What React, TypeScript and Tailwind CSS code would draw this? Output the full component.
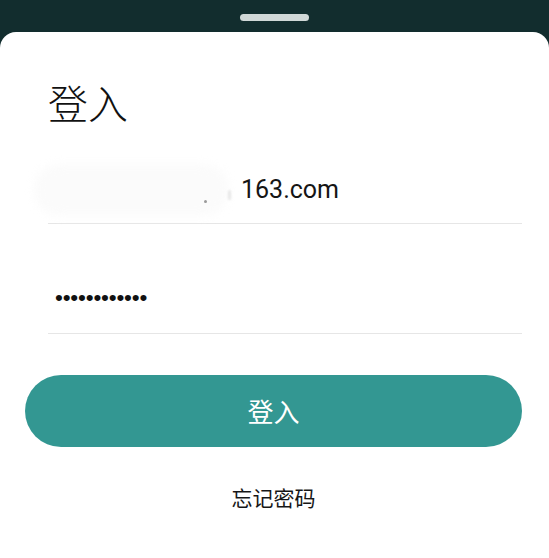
import React from "react";

export default function App() {
  return (
    <div className="w-full h-[558px] bg-[#122d2e] flex flex-col overflow-hidden">
      <div className="h-[32px] shrink-0 flex justify-center pt-[14px]">
        <div className="w-[69px] h-[7px] rounded-full bg-[#d0d8d7]" />
      </div>
      <div className="flex-1 bg-white rounded-t-[16px] pl-[48px] pr-[27px] pt-[50px] flex flex-col">
        <h1
          className="text-[40px] leading-none text-[#111] font-light"
          style={{ fontFamily: '"Noto Sans CJK SC", sans-serif' }}
        >
          登入
        </h1>

        <div className="mt-[31px] h-[71px] pt-[3px] flex items-center border-b border-[#e6e6e6]">
          <div className="relative ml-[-14px] w-[195px] mr-[12px] h-[52px] shrink-0">
            <div className="absolute inset-0 rounded-full bg-[#fbfbfb] blur-[5px]" />
            <div className="absolute left-[170px] top-[36px] w-[3px] h-[3px] rounded-full bg-[#9a9a9a] blur-[0.5px]" />
            <div className="absolute left-[194px] top-[26px] w-[3px] h-[10px] rounded-full bg-[#e6e6e6] blur-[1px]" />
          </div>
          <span
            className="text-[25px] leading-[25px] text-[#151515]"
            style={{ fontFamily: 'Roboto, "Noto Sans", sans-serif' }}
          >
            163.com
          </span>
        </div>

        <div className="h-[110px] pt-[39px] flex items-center border-b border-[#e6e6e6]">
          <span
            className="pl-[7px] text-[22.5px] leading-none tracking-[-0.2px] text-[#111]"
            style={{ fontFamily: '"Liberation Sans", Arial, sans-serif' }}
          >
            ••••••••••••
          </span>
        </div>

        <button
          className="mt-[41px] ml-[-23px] h-[72px] rounded-full bg-[#339792] flex items-center justify-center text-white text-[26px] leading-none"
          style={{ fontFamily: '"Noto Sans CJK SC", sans-serif' }}
        >
          登入
        </button>

        <div
          className="mt-[40px] ml-[-23px] text-center text-[21px] leading-none text-[#161616]"
          style={{ fontFamily: '"Noto Sans CJK SC", sans-serif' }}
        >
          忘记密码
        </div>
      </div>
    </div>
  );
}
